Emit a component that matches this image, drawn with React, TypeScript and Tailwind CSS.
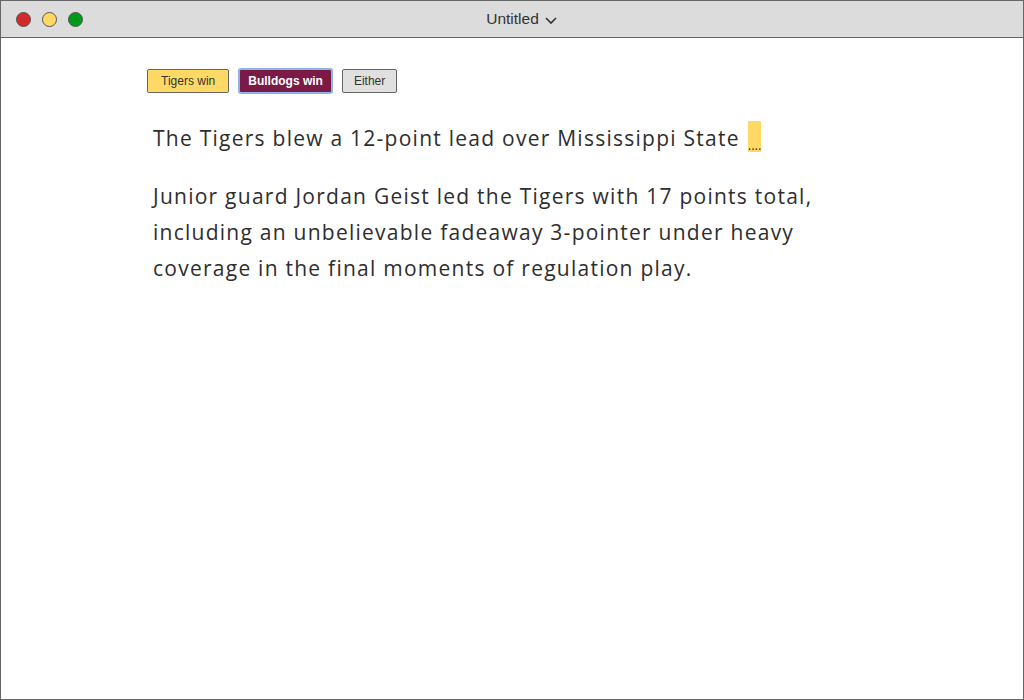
import React from "react";

export default function App() {
  return (
    <div className="w-[1024px] h-[700px] bg-white border border-[#666] flex flex-col overflow-hidden" style={{ fontFamily: "'Open Sans', 'Noto Sans', sans-serif" }}>
      <div className="h-[37px] shrink-0 bg-[#dcdcdc] border-b border-[#666] relative flex items-center">
        <div className="flex items-center gap-[11px] pl-[15px]">
          <span className="w-[15px] h-[15px] rounded-full bg-[#d02a2a] border border-[#555]" />
          <span className="w-[15px] h-[15px] rounded-full bg-[#ffd966] border border-[#555]" />
          <span className="w-[15px] h-[15px] rounded-full bg-[#009a1a] border border-[#555]" />
        </div>
        <div className="absolute left-0 right-0 top-0 h-full flex items-center justify-center pointer-events-none">
          <span className="text-[15.5px] text-[#333] ml-[20px]" style={{ fontFamily: "'Liberation Sans', Arial, sans-serif" }}>Untitled</span>
          <svg width="14" height="10" viewBox="0 0 14 10" className="ml-[5px] mt-[2px]">
            <path d="M2 3 L7 8 L12 3" stroke="#333" strokeWidth="1.6" fill="none" />
          </svg>
        </div>
      </div>
      <div className="flex-1 pl-[146px] pt-[30px]">
        <div className="flex items-center gap-[9px] text-[12px]" style={{ fontFamily: "'Liberation Sans', Arial, sans-serif" }}>
          <div className="h-[24px] px-[13px] flex items-center bg-[#ffd966] border border-[#666] rounded-[2px] text-[#333]">Tigers win</div>
          <div className="h-[26px] px-[8px] flex items-center bg-[#7b1a44] border-2 border-[#8cb4ea] rounded-[3px] text-white font-bold">Bulldogs win</div>
          <div className="h-[24px] px-[11px] flex items-center bg-[#e0e0e0] border border-[#666] rounded-[2px] text-[#333]">Either</div>
        </div>
        <div className="pl-[6px] mt-[26px] text-[21px] font-normal text-[#2e2e2e] tracking-[1.25px] whitespace-nowrap">
          <p className="leading-[36px] flex items-center">
            <span>The Tigers blew a 12-point lead over Mississippi State</span>
            <span className="inline-flex ml-[8px] -mt-[3px] items-end h-[31px]">
              <span className="bg-[#ffd966] w-[13px] h-[31px]" />
              <span className="text-[13px] -ml-[13px] text-[#333] tracking-[0px] leading-[14px]">....</span>
            </span>
          </p>
          <p className="leading-[36px] mt-[22px]">
            Junior guard Jordan Geist led the Tigers with 17 points total,
            <br />
            including an unbelievable fadeaway 3-pointer under heavy
            <br />
            coverage in the final moments of regulation play.
          </p>
        </div>
      </div>
    </div>
  );
}
